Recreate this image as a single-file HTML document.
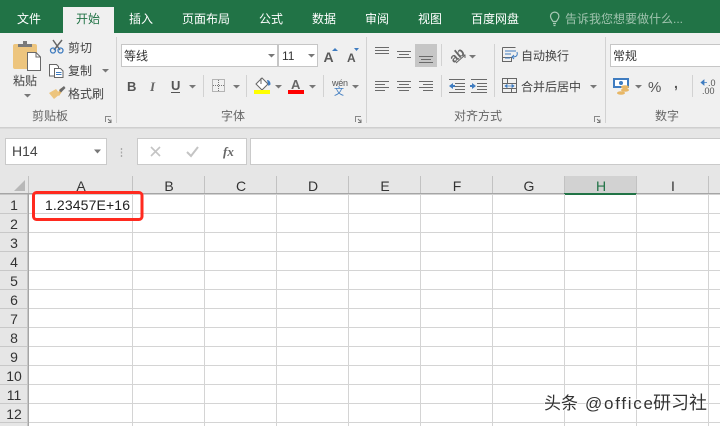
<!DOCTYPE html>
<html><head><meta charset="utf-8"><style>
html,body{margin:0;padding:0;background:#fff;width:720px;height:426px;overflow:hidden}
svg{display:block}
text{font-family:"Liberation Sans","Noto Sans CJK SC",sans-serif}
.tab{font-size:12px;fill:#fff}
.r{font-size:12px;fill:#444}
.g{font-size:12px;fill:#666}
.h{font-size:14px;fill:#333;text-anchor:middle}
.l{stroke:#6a6a6a;stroke-width:1;fill:none}
.sep{stroke:#d2d2d2;stroke-width:1}
.grid{stroke:#d4d4d4;stroke-width:1}
.dd{fill:#777}
</style></head><body>
<svg width="720" height="426" viewBox="0 0 720 426" xmlns="http://www.w3.org/2000/svg">
<rect width="720" height="426" fill="#fff"/>
<!-- title -->
<rect width="720" height="33" fill="#217346"/>
<rect x="63" y="7" width="51" height="26" fill="#f0f0f0"/>
<text class="tab" x="17" y="23">文件</text>
<text class="tab" x="76" y="23" style="fill:#217346">开始</text>
<text class="tab" x="129" y="23">插入</text>
<text class="tab" x="182" y="23">页面布局</text>
<text class="tab" x="259" y="23">公式</text>
<text class="tab" x="312" y="23">数据</text>
<text class="tab" x="365" y="23">审阅</text>
<text class="tab" x="418" y="23">视图</text>
<text class="tab" x="471" y="23">百度网盘</text>
<g fill="none" stroke="#a9c9b6" stroke-width="1.2"><path d="M553 21.500c-1-1.800-2.500-2.800-2.500-5.200a4.200 4.200 0 0 1 8.400 0c0 2.400-1.500 3.400-2.500 5.200z"/><path d="M553 23.500h3M553.500 25.500h2"/></g>
<text x="565" y="23" font-size="12" fill="#9fc3ae">告诉我您想要做什么...</text>
<!-- ribbon -->
<rect y="33" width="720" height="94" fill="#f0f0f0"/>
<!-- paste -->
<rect x="13" y="44" width="24" height="25" rx="2" fill="#edc57e"/>
<path d="M18 47v-3h5v-3h4v3h5v3z" fill="#7a7a7a"/>
<path d="M27.500 52.500h8.500l4.500 4.500v13.500h-13z" fill="#fff" stroke="#6a6a6a"/>
<path d="M36 52.500v4.500h4.500" fill="none" stroke="#6a6a6a"/>
<text class="r" x="13" y="85">粘贴</text>
<path d="M24 94h7l-3.500 3.500z" class="dd"/>
<!-- scissors -->
<g fill="none"><path d="M53 40l7 10M62 40l-8 10" stroke="#666" stroke-width="1.500"/><circle cx="53" cy="50.500" r="2.500" stroke="#3f7cc0" stroke-width="1.300"/><circle cx="60.500" cy="50.500" r="2.500" stroke="#3f7cc0" stroke-width="1.300"/></g>
<text class="r" x="68" y="52">剪切</text>
<!-- copy -->
<g fill="#fff" stroke="#666"><path d="M49.500 64.500h7l2 2v9.500h-9z"/><path d="M54.500 68.500h6l2.500 2.500v6.500h-8.500z"/></g>
<path d="M56 72.500h5.500M56 74.500h5.500" stroke="#3f7cc0"/>
<text class="r" x="68" y="75">复制</text>
<path d="M102 69h7l-3.500 3.500z" class="dd"/>
<!-- brush -->
<path d="M57 94l4-6 2 2-4 6z" fill="#e8b766"/><path d="M49 93l7-4 4 5-6 5z" fill="#edc57e"/><path d="M59 90l5-4 1.500 2-4.500 4.500z" fill="#6a6a6a"/>
<text class="r" x="68" y="98">格式刷</text>
<text class="g" x="32" y="120">剪贴板</text>
<path d="M105.500 122v-5.500h5.500" fill="none" stroke="#888"/><path d="M108 119l3 3M111 119.500v3h-3" fill="none" stroke="#777"/>
<line class="sep" x1="116.500" y1="37" x2="116.500" y2="123"/>
<!-- font -->
<rect x="121.500" y="44.500" width="156" height="22" fill="#fff" stroke="#c6c6c6"/>
<text x="124" y="60" font-size="12" fill="#333">等线</text>
<path d="M268 54h7l-3.500 3.500z" class="dd"/>
<rect x="278.500" y="44.500" width="39" height="22" fill="#fff" stroke="#c6c6c6"/>
<text x="282" y="60" font-size="12" fill="#333">11</text>
<path d="M308 54h7l-3.500 3.500z" class="dd"/>
<text x="323.500" y="62" font-size="14" font-weight="bold" fill="#5a5a5a">A</text>
<path d="M332 51l3-3 3 3z" fill="#3f7cc0"/>
<text x="347" y="62" font-size="12" font-weight="bold" fill="#5a5a5a">A</text>
<path d="M354 48h5l-2.500 3z" fill="#3f7cc0"/>
<text x="127" y="91" font-size="13" font-weight="bold" fill="#555">B</text>
<text x="150" y="91" font-size="13" font-style="italic" style="font-family:'Liberation Serif',serif" font-weight="bold" fill="#666">I</text>
<text x="171" y="90" font-size="13" font-weight="bold" fill="#555">U</text>
<line x1="171" y1="92.500" x2="180" y2="92.500" stroke="#555"/>
<path d="M189 85h7l-3.500 3.500z" class="dd"/>
<line class="sep" x1="203.500" y1="75" x2="203.500" y2="97"/>
<rect x="212.500" y="79.500" width="12" height="12" fill="none" stroke="#777" stroke-dasharray="1 1"/>
<path d="M218.500 80v11M213 85.500h11" stroke="#777" stroke-dasharray="1 1"/>
<path d="M233 85h7l-3.500 3.500z" class="dd"/>
<line class="sep" x1="246.500" y1="75" x2="246.500" y2="97"/>
<path d="M256 84l6-6 6 6-5.500 5.500h-1z" fill="#fff" stroke="#666"/><path d="M261 78v6" stroke="#666"/><path d="M267 80c2.500 0 3.500 2 3.500 4.500l-2 1.500z" fill="#3f7cc0"/>
<rect x="254" y="90" width="16" height="4" fill="#ffff00"/>
<path d="M275 85h7l-3.500 3.500z" class="dd"/>
<text x="291" y="89" font-size="13" font-weight="bold" fill="#666">A</text>
<rect x="288" y="90" width="16" height="4" fill="#ff0000"/>
<path d="M309 85h7l-3.500 3.500z" class="dd"/>
<line class="sep" x1="323.500" y1="75" x2="323.500" y2="97"/>
<text x="332" y="86" font-size="9" fill="#555" textLength="16">wén</text>
<text x="334" y="95" font-size="10" fill="#3f7cc0">文</text>
<path d="M352 85h7l-3.500 3.500z" class="dd"/>
<text class="g" x="221" y="120">字体</text>
<path d="M355.500 122v-5.500h5.500" fill="none" stroke="#888"/><path d="M358 119l3 3M361 119.500v3h-3" fill="none" stroke="#777"/>
<line class="sep" x1="366.500" y1="37" x2="366.500" y2="123"/>
<!-- align -->
<rect x="415" y="44" width="22" height="23" fill="#c6c6c6"/>
<path class="l" d="M375 47.500h14M375 50.500h14M375 53.500h14M397 51.500h14M399 54.500h10M397 57.500h14M419 56.500h14M421 59.500h10M419 62.500h14"/>
<path class="l" d="M375 81.500h14M375 84.500h10M375 87.500h14M375 90.500h10M397 81.500h14M399 84.500h10M397 87.500h14M399 90.500h10M419 81.500h14M423 84.500h10M419 87.500h14M423 90.500h10"/>
<line class="sep" x1="441.500" y1="44" x2="441.500" y2="66"/>
<line class="sep" x1="441.500" y1="75" x2="441.500" y2="97"/>
<text x="449" y="60" font-size="13" font-weight="bold" fill="#666" transform="rotate(-40 456 55)">ab</text>
<path d="M456 63l9-8M462 55h3v3" fill="none" stroke="#666"/>
<path d="M469 55h7l-3.500 3.500z" class="dd"/>
<path class="l" d="M449 79.500h16M455 83.500h10M455 86.500h10M455 89.500h10M449 92.500h16M471 79.500h16M477 83.500h10M477 86.500h10M477 89.500h10M471 92.500h16"/>
<path d="M449 86l4-3v2h2v2h-2v2z" fill="#3f7cc0"/><path d="M476 86l-4-3v2h-2v2h2v2z" fill="#3f7cc0"/>
<line class="sep" x1="494.500" y1="44" x2="494.500" y2="97"/>
<!-- wrap -->
<path d="M502.500 47.500h13M502.500 47.500v14h9v-4h-9" fill="none" stroke="#666"/>
<path d="M505 51h11M505 54h6M505 58h5" stroke="#3f7cc0"/>
<path d="M517 52c1 4-1 5-5 5M514 55l-2 2 2 2" fill="none" stroke="#3f7cc0"/>
<text class="r" x="521" y="60">自动换行</text>
<rect x="502.500" y="78.500" width="14" height="14" fill="none" stroke="#666"/>
<path d="M503 83.500h13M503 88.500h13M507.500 79v4M511.500 89v3" stroke="#666"/>
<path d="M505 86h9M505 86l2-1.500v3zM514 86l-2-1.500v3z" stroke="#3f7cc0" fill="#3f7cc0" stroke-width=".8"/>
<text class="r" x="521" y="91">合并后居中</text>
<path d="M590 85h7l-3.500 3.500z" class="dd"/>
<text class="g" x="454" y="120">对齐方式</text>
<path d="M594.500 122v-5.500h5.500" fill="none" stroke="#888"/><path d="M597 119l3 3M600 119.500v3h-3" fill="none" stroke="#777"/>
<line class="sep" x1="605.500" y1="37" x2="605.500" y2="123"/>
<!-- number -->
<rect x="610.500" y="44.500" width="120" height="22" fill="#fff" stroke="#c6c6c6"/>
<text x="613" y="60" font-size="12" fill="#333">常规</text>
<rect x="614" y="79" width="14" height="8" fill="#fff" stroke="#3f7cc0" stroke-width="2"/><circle cx="621" cy="83" r="2" fill="#3f7cc0"/>
<ellipse cx="625" cy="87" rx="4" ry="1.800" fill="#e8b766"/><ellipse cx="625" cy="90" rx="4" ry="1.800" fill="#e8b766"/><ellipse cx="621" cy="93" rx="4" ry="1.800" fill="#e8b766"/>
<path d="M635 85h7l-3.500 3.500z" class="dd"/>
<text x="648" y="92" font-size="15" fill="#555">%</text>
<text x="674" y="88" font-size="14" font-weight="bold" fill="#555">,</text>
<line class="sep" x1="692.500" y1="75" x2="692.500" y2="97"/>
<path d="M701 82.500h6M701 82.500l3-2.500v5z" stroke="#3f7cc0" fill="#3f7cc0" stroke-width=".8"/>
<text x="708" y="86" font-size="9" fill="#555">.0</text>
<text x="702" y="94" font-size="9" fill="#555">.00</text>
<text class="g" x="655" y="120">数字</text>
<!-- formula band -->
<rect y="127" width="720" height="67" fill="#e6e6e6"/>
<rect y="127" width="720" height="1.500" fill="#cfcfcf"/>
<rect x="5.500" y="138.500" width="101" height="26" fill="#fff" stroke="#cacaca"/>
<text x="12" y="156" font-size="14" fill="#444">H14</text>
<path d="M94 149.500h7l-3.500 4z" fill="#777"/>
<path d="M121.500 148v2M121.500 151.500v2M121.500 155v2" stroke="#aaa" stroke-width="1.300"/>
<rect x="137.500" y="138.500" width="109" height="26" fill="#fff" stroke="#cacaca"/>
<path d="M151 147l9 9M160 147l-9 9" stroke="#c4c4c4" stroke-width="1.600" fill="none"/>
<path d="M187 152l4 4 7-9" stroke="#c4c4c4" stroke-width="2" fill="none"/>
<text x="223" y="156" font-size="13" font-style="italic" font-weight="bold" style="font-family:'Liberation Serif',serif" fill="#666">fx</text>
<rect x="250.500" y="138.500" width="480" height="26" fill="#fff" stroke="#cacaca"/>
<!-- headers -->
<rect y="176" width="720" height="18" fill="#e6e6e6"/>
<rect x="564" y="176" width="72" height="18" fill="#d2d2d2"/>
<rect y="194" width="28" height="232" fill="#e6e6e6"/>
<path d="M25 180v11H14z" fill="#b8b8b8"/>
<g stroke="#c2c2c2"><path d="M28.500 176v18M132.500 176v18M204.500 176v18M276.500 176v18M348.500 176v18M420.500 176v18M492.500 176v18M564.500 176v18M636.500 176v18M708.500 176v18"/></g>
<rect y="193" width="720" height="1.500" fill="#a5a5a5"/>
<rect x="564" y="193" width="72.500" height="2" fill="#217346"/>
<rect x="27.500" y="194" width="1.500" height="232" fill="#a5a5a5"/>
<path class="grid" d="M132.500 194v232M204.500 194v232M276.500 194v232M348.500 194v232M420.500 194v232M492.500 194v232M564.500 194v232M636.500 194v232M708.500 194v232"/>
<path class="grid" d="M29 213.500h691M29 232.500h691M29 251.500h691M29 270.500h691M29 289.500h691M29 308.500h691M29 327.500h691M29 346.500h691M29 365.500h691M29 384.500h691M29 403.500h691M29 422.500h691"/>
<path stroke="#c8c8c8" d="M0 213.500h27M0 232.500h27M0 251.500h27M0 270.500h27M0 289.500h27M0 308.500h27M0 327.500h27M0 346.500h27M0 365.500h27M0 384.500h27M0 403.500h27M0 422.500h27"/>
<text class="h" x="81" y="191">A</text><text class="h" x="169" y="191">B</text><text class="h" x="241" y="191">C</text><text class="h" x="313" y="191">D</text><text class="h" x="385" y="191">E</text><text class="h" x="457" y="191">F</text><text class="h" x="529" y="191">G</text><text class="h" x="601" y="191" style="fill:#217346">H</text><text class="h" x="673" y="191">I</text>
<text class="h" x="14" y="210">1</text><text class="h" x="14" y="229">2</text><text class="h" x="14" y="248">3</text><text class="h" x="14" y="267">4</text><text class="h" x="14" y="286">5</text><text class="h" x="14" y="305">6</text><text class="h" x="14" y="324">7</text><text class="h" x="14" y="343">8</text><text class="h" x="14" y="362">9</text><text class="h" x="14" y="381">10</text><text class="h" x="14" y="400">11</text><text class="h" x="14" y="419">12</text>
<!-- cell -->
<text x="45" y="210" font-size="14" fill="#222" textLength="85">1.23457E+16</text>
<rect x="33.500" y="192.500" width="108.500" height="27" rx="3" fill="none" stroke="#ff2a1f" stroke-width="3"/>
<!-- watermark -->
<g font-size="17" fill="#fff" stroke="#fff" stroke-width="2" opacity=".8">
<text x="544" y="409">头条</text><text x="585" y="409" textLength="68">@office</text><text x="653" y="409" font-size="18">研习社</text>
</g>
<g font-size="17" fill="#333">
<text x="544" y="409">头条</text><text x="585" y="409" textLength="68">@office</text><text x="653" y="409" font-size="18">研习社</text>
</g>
</svg>
</body></html>
